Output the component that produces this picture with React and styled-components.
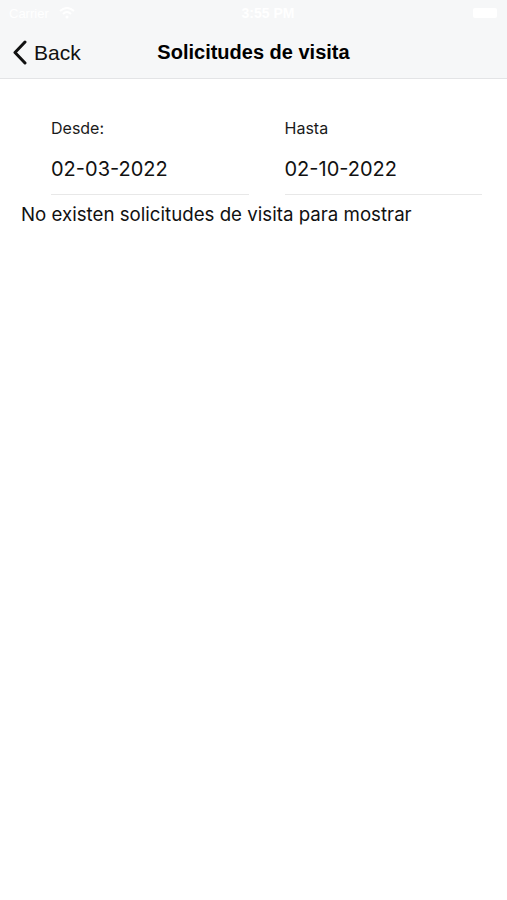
import React from "react"
import styled, { createGlobalStyle } from "styled-components"

const GlobalStyle = createGlobalStyle`
  html, body {
    margin: 0;
    padding: 0;
    background: #ffffff;
  }
  body {
    font-family: "Liberation Sans", Arial, sans-serif;
    color: #111;
  }
`

const Screen = styled.div`
  width: 507px;
  min-height: 900px;
  background: #fff;
`

const TopBar = styled.header`
  background: #f6f7f8;
  border-bottom: 1px solid #e3e4e6;
`

const StatusBar = styled.div`
  height: 26px;
  display: flex;
  align-items: center;
  padding: 0 10px 0 9px;
  color: #fff;
  font-size: 13px;
`

const Carrier = styled.div`
  display: flex;
  align-items: center;
  gap: 10px;
  flex: 1;
`

const Clock = styled.div`
  font-weight: bold;
  font-size: 14px;
  width: 100px;
  text-align: center;
  margin-right: 155px;
`

const Battery = styled.div`
  width: 24px;
  height: 10px;
  background: #fff;
  border-radius: 2px;
`

const NavBar = styled.div`
  height: 52px;
  display: grid;
  grid-template-columns: 100px 1fr 100px;
  align-items: center;
`

const BackButton = styled.button`
  display: flex;
  align-items: center;
  gap: 6px;
  border: 0;
  background: none;
  padding: 0 0 0 12px;
  font-family: inherit;
  font-size: 21px;
  color: #111;
  margin-top: 1px;
`

const Title = styled.h1`
  margin: 0;
  text-align: center;
  font-size: 20px;
  font-weight: bold;
  color: #000;
`

const Body = styled.main`
  padding: 0 20px;
  font-family: Inter, "Liberation Sans", sans-serif;
`

const Range = styled.div`
  display: grid;
  grid-template-columns: 1fr 1fr;
  padding-top: 39px;
`

const Field = styled.div`
  padding: 0 5px 0 31px;
`

const Label = styled.div`
  font-size: 16px;
  line-height: 20px;
  color: #1a1a1a;
`

const DateValue = styled.div`
  margin-top: 19px;
  font-size: 20px;
  line-height: 24px;
  padding-bottom: 13px;
  border-bottom: 1px solid #e8e8e8;
  color: #111;
`

const Empty = styled.p`
  margin: 8px 0 0 1px;
  font-size: 18.7px;
  color: #111;
`

const Chevron = () => (
  <svg width="16" height="25" viewBox="0 0 16 25">
    <path
      d="M13 2 L3 12.5 L13 23"
      fill="none"
      stroke="#111"
      strokeWidth="3"
      strokeLinecap="round"
      strokeLinejoin="round"
    />
  </svg>
)

const Wifi = () => (
  <svg width="16" height="12" viewBox="0 0 16 12">
    <path d="M1 4 Q8 -2 15 4" fill="none" stroke="#fff" strokeWidth="2" />
    <path d="M4 7 Q8 3 12 7" fill="none" stroke="#fff" strokeWidth="2" />
    <circle cx="8" cy="10" r="1.5" fill="#fff" />
  </svg>
)

const App = () => (
  <Screen>
    <GlobalStyle />
    <TopBar>
      <StatusBar>
        <Carrier>
          Carrier <Wifi />
        </Carrier>
        <Clock>3:55 PM</Clock>
        <Battery />
      </StatusBar>
      <NavBar>
        <BackButton>
          <Chevron />
          Back
        </BackButton>
        <Title>Solicitudes de visita</Title>
        <span />
      </NavBar>
    </TopBar>
    <Body>
      <Range>
        <Field>
          <Label>Desde:</Label>
          <DateValue>02-03-2022</DateValue>
        </Field>
        <Field>
          <Label>Hasta</Label>
          <DateValue>02-10-2022</DateValue>
        </Field>
      </Range>
      <Empty>No existen solicitudes de visita para mostrar</Empty>
    </Body>
  </Screen>
)

export default App
